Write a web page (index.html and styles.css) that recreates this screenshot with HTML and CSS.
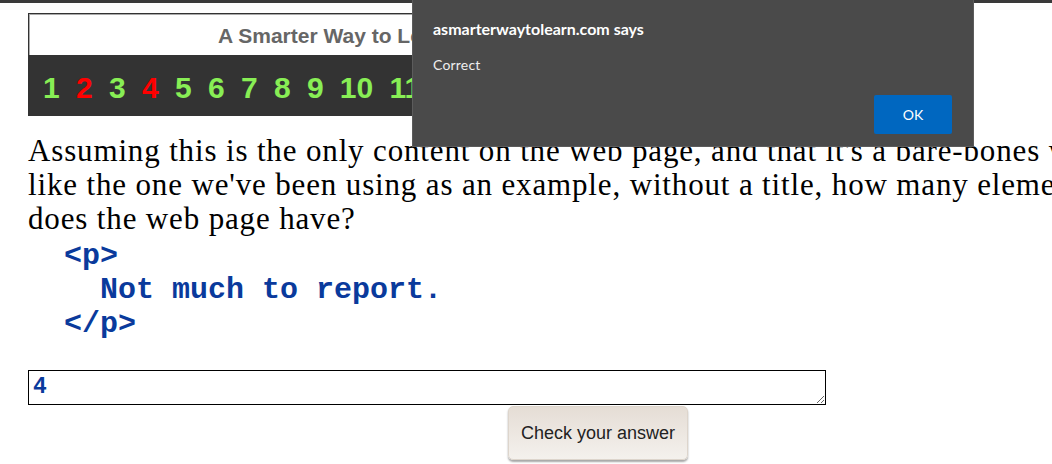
FILE: index.html
```html
<!DOCTYPE html>
<html lang="en">
<head>
<meta charset="utf-8">
<title>A Smarter Way to Learn</title>
<link rel="stylesheet" href="styles.css">
</head>
<body>
<div class="topbar"></div>
<main class="page">
  <header class="banner">
    <div class="banner-title">A Smarter Way to Learn HTML &amp; CSS</div>
    <div class="banner-nums">
      <span class="n ok">1</span><span class="n bad">2</span><span class="n ok">3</span><span class="n bad">4</span><span class="n ok">5</span><span class="n ok">6</span><span class="n ok">7</span><span class="n ok">8</span><span class="n ok">9</span><span class="n ok">10</span><span class="n ok">11</span><span class="n ok">12</span><span class="n ok">13</span><span class="n ok">14</span><span class="n ok">15</span><span class="n ok">16</span>
    </div>
  </header>
  <p class="question">Assuming this is the only content on the web page, and that it's a bare-bones web page<br>like the one we've been using as an example, without a title, how many elements<br>does the web page have?</p>
  <pre class="code">  &lt;p&gt;
    Not much to report.
  &lt;/p&gt;</pre>
  <textarea class="answer">4</textarea>
  <div class="actions"><button class="check" type="button">Check your answer</button></div>
</main>
<div class="dialog">
  <div class="dialog-title">asmarterwaytolearn.com says</div>
  <div class="dialog-msg">Correct</div>
  <div class="dialog-actions"><button class="dialog-ok" type="button">OK</button></div>
</div>
</body>
</html>
```
FILE: styles.css
```css
html {
  overflow: hidden;
}
body {
  margin: 0;
  background: #fff;
  position: relative;
  min-height: 464px;
}
.topbar {
  height: 3px;
  background: #3a3a3a;
}
.page {
  width: 1140px;
  padding: 10px 0 0 28px;
}
.banner {
  width: 760px;
}
.banner-title {
  height: 42px;
  box-sizing: border-box;
  border: 1px solid #333;
  border-bottom: none;
  box-shadow: inset 1px 1px 0 #aaa;
  padding: 9px 0 0 189px;
  font: bold 21px/1.2 "Liberation Sans", Arial, sans-serif;
  color: #666;
  white-space: nowrap;
  overflow: hidden;
}
.banner-nums {
  height: 61px;
  box-sizing: border-box;
  background: #333;
  display: flex;
  align-items: center;
  gap: 16.3px;
  padding: 4px 0 0 15px;
  overflow: hidden;
  font: bold 30px/1 "Liberation Sans", Arial, sans-serif;
}
.n.ok { color: #88ee55; }
.n.bad { color: #ff0000; }
.question {
  margin: 18px 0 0;
  font-family: "Liberation Serif", "Times New Roman", serif;
  font-size: 31px;
  letter-spacing: 0.85px;
  line-height: 34px;
  color: #000;
  white-space: nowrap;
}
.code {
  margin: 3px 0 0;
  font: bold 30px/34px "Liberation Mono", "Courier New", monospace;
  color: #0a3a9c;
}
.answer {
  display: block;
  margin: 29px 0 0;
  width: 798px;
  height: 35px;
  box-sizing: border-box;
  border: 1px solid #000;
  padding: 4px 4px;
  font: bold 23px/1.1 "Liberation Mono", "Courier New", monospace;
  color: #0a3a9c;
  resize: vertical;
  background: #fff;
}
.actions {
  text-align: center;
  margin-top: 1px;
}
.check {
  width: 180px;
  height: 54px;
  border: 1px solid #ddd5cc;
  border-radius: 5px;
  background: linear-gradient(#e5ddd5, #f4f1ed);
  box-shadow: 0 2px 2px rgba(0, 0, 0, 0.35);
  font: 18px "Liberation Sans", Arial, sans-serif;
  color: #222;
  padding: 0;
}
.dialog {
  position: absolute;
  left: 412px;
  top: 0;
  width: 562px;
  height: 147px;
  box-sizing: border-box;
  background: #4a4a4a;
  border: 1px solid #5c5c5c;
  border-top: none;
  padding: 19px 21px 12px 20px;
  display: flex;
  flex-direction: column;
  color: #fff;
  font-family: Lato, "Open Sans", sans-serif;
}
.dialog-title {
  font-weight: bold;
  font-size: 16px;
  line-height: 20px;
}
.dialog-msg {
  margin-top: 17px;
  font-size: 14px;
  line-height: 18px;
  letter-spacing: 0.2px;
  color: #eee;
}
.dialog-actions {
  margin-top: auto;
  display: flex;
  justify-content: flex-end;
}
.dialog-ok {
  width: 78px;
  height: 39px;
  border: none;
  border-radius: 2px;
  background: #0067c0;
  color: #fff;
  font: 14px Lato, "Open Sans", sans-serif;
}
```
